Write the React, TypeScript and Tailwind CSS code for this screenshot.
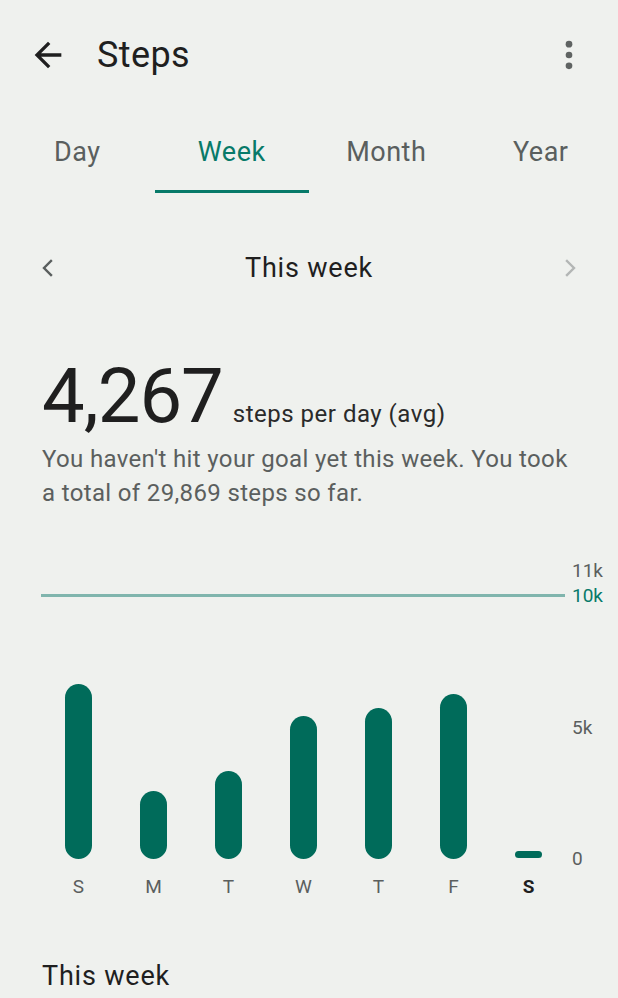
import React from 'react';

const days = [
  { label: 'S', h: 175 },
  { label: 'M', h: 68 },
  { label: 'T', h: 88 },
  { label: 'W', h: 143 },
  { label: 'T', h: 151 },
  { label: 'F', h: 165 },
  { label: 'S', h: 0, today: true },
];

const BackIcon = () => (
  <svg width="40" height="40" viewBox="0 0 24 24" fill="#1f1f1f">
    <path d="M20 11H7.83l5.59-5.59L12 4l-8 8 8 8 1.41-1.41L7.83 13H20v-2z" />
  </svg>
);

const MoreIcon = () => (
  <svg width="40" height="40" viewBox="0 0 24 24" fill="#5f6362">
    <circle cx="12" cy="5.5" r="2" />
    <circle cx="12" cy="12" r="2" />
    <circle cx="12" cy="18.5" r="2" />
  </svg>
);

const Chevron = ({ dir, color }: { dir: 'left' | 'right'; color: string }) => (
  <svg width="24" height="24" viewBox="0 0 24 24" fill="none" stroke={color} strokeWidth="2.4" strokeLinecap="square">
    {dir === 'left' ? <path d="M15 5l-7 7 7 7" /> : <path d="M9 5l7 7-7 7" />}
  </svg>
);

const App: React.FC = () => {
  return (
    <div className="w-[618px] h-[998px] overflow-hidden bg-[#eff1ee] font-['Roboto',sans-serif] text-[#1f1f1f]">
      {/* top bar */}
      <div className="flex items-center h-[110px] pl-[28px] pr-[29px]">
        <BackIcon />
        <span className="ml-[29px] text-[36px] leading-none tracking-[0.4px] text-[#1f1f1f]">Steps</span>
        <div className="ml-auto">
          <MoreIcon />
        </div>
      </div>

      {/* tabs */}
      <div className="grid grid-cols-4 h-[83px]">
        {['Day', 'Week', 'Month', 'Year'].map((t) => {
          const active = t === 'Week';
          return (
            <div key={t} className="relative flex items-center justify-center pt-[1px]">
              <span
                className={`text-[27px] tracking-[0.5px] ${
                  active ? 'text-[#077a69]' : 'text-[#5a5f5e]'
                }`}
              >
                {t}
              </span>
              {active && <div className="absolute bottom-[0px] left-0 right-0 h-[3px] bg-[#077a69]" />}
            </div>
          );
        })}
      </div>

      {/* week selector */}
      <div className="flex items-center justify-between mt-[55px] pl-[36px] pr-[36px] h-[40px]">
        <Chevron dir="left" color="#5a5f5e" />
        <span className="text-[27px] tracking-[0.8px] text-[#1f1f1f]">This week</span>
        <Chevron dir="right" color="#b3b6b5" />
      </div>

      {/* summary */}
      <div className="px-[42px] mt-[70px]">
        <div className="flex items-baseline">
          <span className="text-[76px] leading-none tracking-[-1px] text-[#1f1f1f]">4,267</span>
          <span className="ml-[10px] text-[24px] tracking-[0.5px] text-[#2a2a2a]">steps per day (avg)</span>
        </div>
        <p className="mt-[8px] text-[24px] leading-[34px] tracking-[0.35px] text-[#5b5f5e]">
          You haven't hit your goal yet this week. You took a total of 29,869 steps so far.
        </p>
      </div>

      {/* chart */}
      <div className="relative mt-[51px] ml-[41px] w-[577px] h-[350px]">
        {/* y labels */}
        <span className="absolute left-[531px] top-[0px] text-[19px] leading-none text-[#5b5f5e]">11k</span>
        <span className="absolute left-[531px] top-[25px] text-[19px] leading-none text-[#077a69]">10k</span>
        <div className="absolute left-0 top-[33px] w-[524px] h-[3px] bg-[#80b5ad]" />
        <span className="absolute left-[531px] top-[157px] text-[19px] leading-none text-[#5b5f5e]">5k</span>
        <span className="absolute left-[531px] top-[288px] text-[19px] leading-none text-[#5b5f5e]">0</span>

        <div className="absolute left-0 top-0 w-[525px] h-[298px] grid grid-cols-7 items-end">
          {days.map((d, i) => (
            <div key={i} className="flex justify-center">
              {d.today ? (
                <div className="w-[27px] h-[7px] mb-[1px] rounded-full bg-[#006b5a]" />
              ) : (
                <div className="w-[27px] rounded-full bg-[#006b5a]" style={{ height: d.h }} />
              )}
            </div>
          ))}
        </div>
        <div className="absolute left-0 top-[316px] w-[525px] grid grid-cols-7">
          {days.map((d, i) => (
            <span
              key={i}
              className={`text-center text-[19px] leading-none ${
                d.today ? 'font-bold text-[#1f1f1f]' : 'text-[#5b5f5e]'
              }`}
            >
              {d.label}
            </span>
          ))}
        </div>
      </div>

      <div className="px-[42px] mt-[45px]">
        <span className="text-[27px] tracking-[0.8px] text-[#1f1f1f]">This week</span>
      </div>
    </div>
  );
};

export default App;
